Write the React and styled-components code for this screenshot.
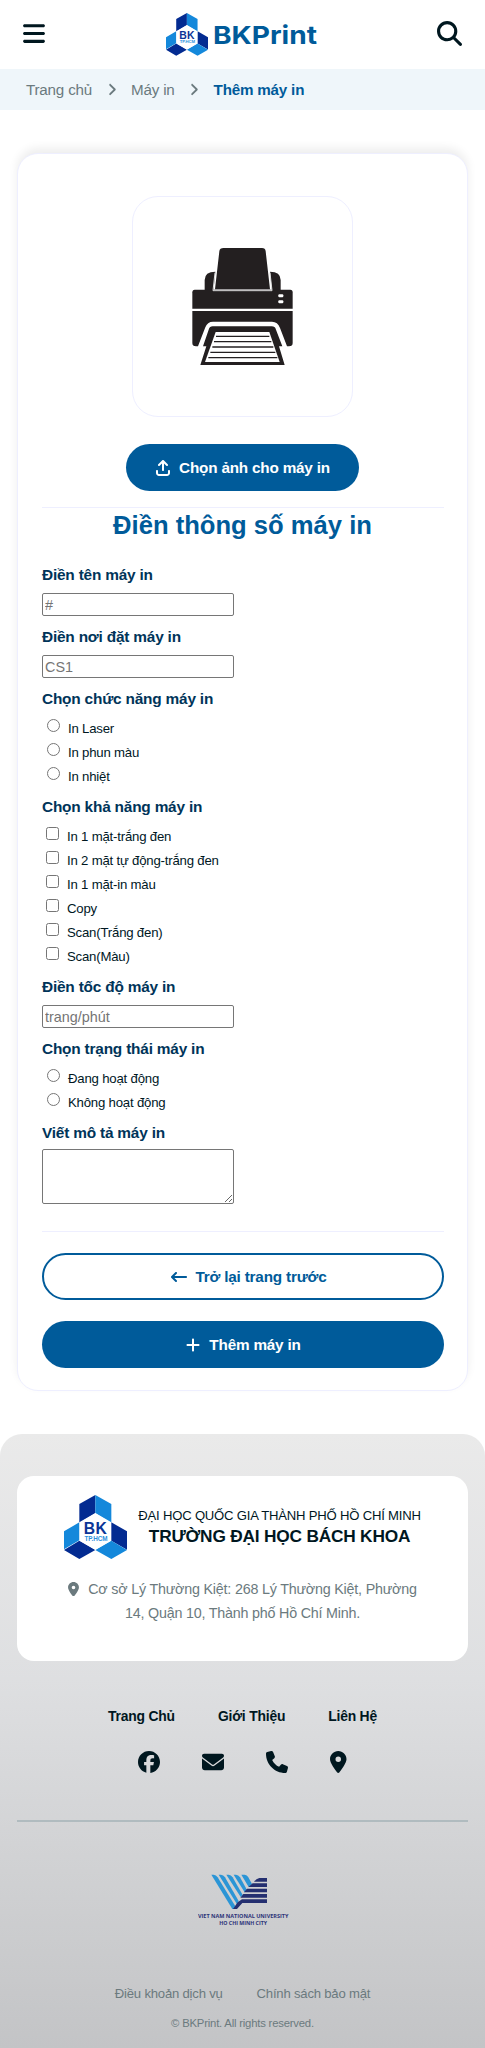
import React from "react";
import styled, { createGlobalStyle } from "styled-components";
import {
  FaBars,
  FaMagnifyingGlass,
  FaAngleRight,
  FaArrowUpFromBracket,
  FaArrowLeftLong,
  FaPlus,
  FaLocationDot,
  FaFacebook,
  FaEnvelope,
  FaPhone,
} from "react-icons/fa6";

const blue = "#005b9a";
const ink = "#00171f";
const muted = "#6b7a7e";
const line = "#eeefff";

const Global = createGlobalStyle`
  * { box-sizing: border-box; }
  body {
    margin: 0;
    background: #fff;
    color: ${ink};
    font-family: "Liberation Sans", Arial, sans-serif;
    letter-spacing: -0.2px;
  }
  svg { display: block; flex: none; }
`;

const Header = styled.header`
  height: 69px;
  padding: 0 23px;
  display: flex;
  align-items: center;
  justify-content: space-between;
  font-size: 25px;
`;

const MenuIcon = styled(FaBars)`
  width: 22px;
  height: 25px;
  margin-top: -3px;
`;

const SearchIcon = styled(FaMagnifyingGlass)`
  margin-top: -2px;
`;

const Brand = styled.div`
  display: flex;
  align-items: center;
  gap: 6px;
`;

const Breadcrumb = styled.nav`
  height: 41px;
  padding: 0 26px;
  display: flex;
  align-items: center;
  gap: 11.5px;
  background: #eff6fa;
  color: ${muted};
  font-size: 15.2px;
  svg { width: 16px; height: 15px; }
  b { color: ${blue}; }
`;

const Card = styled.main`
  margin: 43px 17px 0;
  height: 1238px;
  padding: 42px 23px 0 24px;
  border: 1px solid ${line};
  border-radius: 21px;
  background: #fff;
  box-shadow: 0 -5px 10px rgba(0, 0, 0, 0.07);
  display: flex;
  flex-direction: column;
`;

const Preview = styled.div`
  align-self: center;
  width: 221px;
  height: 221px;
  margin-right: 2px;
  border: 1px solid ${line};
  border-radius: 26px;
  overflow: hidden;
`;

const Button = styled.button`
  align-self: ${(p) => (p.$wide ? "stretch" : "center")};
  width: ${(p) => (p.$wide ? "auto" : "233px")};
  height: 47px;
  padding: 0 0 0 ${(p) => (p.$outline ? 12 : 0)}px;
  border: ${(p) => (p.$outline ? `2px solid ${blue}` : "0")};
  border-radius: 24px;
  background: ${(p) => (p.$outline ? "#fff" : blue)};
  color: ${(p) => (p.$outline ? blue : "#fff")};
  display: flex;
  align-items: center;
  justify-content: center;
  gap: 8px;
  font: 700 15.3px/20px "Liberation Sans", Arial, sans-serif;
  letter-spacing: -0.2px;
  margin: ${(p) => p.$top}px ${(p) => (p.$wide ? 0 : 1)}px 0 0;
  svg { width: 16px; height: 16px; }
`;

const Rule = styled.hr`
  width: 100%;
  height: 1px;
  border: 0;
  margin: ${(p) => p.$top}px 0 0;
  background: ${line};
`;

const Title = styled.h2`
  margin: 2px 1px 0 0;
  height: 55px;
  text-align: center;
  color: ${blue};
  font-size: 25.6px;
  letter-spacing: 0;
  line-height: 31px;
`;

const Label = styled.h3`
  margin: 0;
  height: ${(p) => (p.$tight ? 26 : 28)}px;
  color: #003459;
  font-size: 15.4px;
  line-height: 20px;
`;

const Input = styled.input`
  display: block;
  width: 192px;
  height: 23px;
  margin: 0 0 11px;
  padding: 1px 2px;
  border: 1px solid #767676;
  border-radius: 2px;
  font: 14.4px "Liberation Sans", Arial, sans-serif;
  &::placeholder { color: #757575; }
`;

const Area = styled.textarea`
  display: block;
  width: 192px;
  height: 55px;
  border: 1px solid #767676;
  border-radius: 2px;
`;

const Options = styled.div`
  padding-bottom: 8px;
`;

const Option = styled.label`
  height: 24px;
  padding-left: 4px;
  display: flex;
  align-items: center;
  gap: 8px;
  font-size: 13.2px;
  line-height: 20px;
  input { width: 13px; height: 13px; margin: 0 0 7px ${(p) => (p.$radio ? 1 : 0)}px; }
`;

const Footer = styled.footer`
  margin-top: 43px;
  height: 614px;
  padding: 42px 17px 0;
  border-radius: 22px 22px 0 0;
  background: linear-gradient(#eaeaea, #dedfe1 40%, #c3c4c6);
  display: flex;
  flex-direction: column;
`;

const School = styled.section`
  height: 185px;
  padding-top: 19px;
  border-radius: 17px;
  background: #fff;
  text-align: center;
`;

const SchoolHead = styled.div`
  display: flex;
  justify-content: center;
  gap: 11px;
`;

const SchoolName = styled.div`
  padding-top: 11px;
  font-size: 13.1px;
  line-height: 20px;
  b { display: block; font-size: 17.3px; line-height: 21px; }
`;

const Address = styled.p`
  margin: 18px auto 0;
  width: 350px;
  color: ${muted};
  font-size: 14.3px;
  line-height: 24px;
  svg { display: inline-block; width: 11px; height: 14.5px; vertical-align: -2px; margin-right: 9px; }
`;

const Links = styled.div`
  display: flex;
  justify-content: center;
  gap: ${(p) => p.$gap}px;
  margin-top: ${(p) => p.$top}px;
  line-height: 20px;
  font-size: ${(p) => p.$size}px;
  font-weight: ${(p) => (p.$bold ? 700 : 400)};
  color: ${(p) => (p.$bold ? ink : muted)};
`;

const Social = styled.div`
  display: flex;
  justify-content: center;
  gap: 42px;
  margin-top: 25px;
  font-size: 22px;
  svg:last-child { width: 16.5px; }
`;

const FooterRule = styled.hr`
  width: 100%;
  height: 2px;
  margin: 47px 0 52px;
  border: 0;
  background: #b0bbbf;
`;

const Copyright = styled.p`
  margin: 9px 0 0;
  text-align: center;
  color: ${muted};
  font-size: 11.3px;
  line-height: 20px;
`;

const VnuBox = styled.div`
  display: flex;
  justify-content: center;
  padding-left: 2px;
`;

function Wordmark() {
  return (
    <svg width="103" height="30" viewBox="0 0 103 30">
      <text x="-1" y="24" fill={blue} fontFamily="Inter, sans-serif" fontWeight="700" fontSize="24.5" letterSpacing="0" textLength="104" lengthAdjust="spacingAndGlyphs">BKPrint</text>
    </svg>
  );
}

function BkLogo({ size }) {
  const sans = "Liberation Sans, Arial, sans-serif";
  return (
    <svg width={size} height={(size * 192) / 189} viewBox="192 75 189 192">
      <path fill="#032b91" d="M286 75 238 102V157L286 129ZM334 157 381 184V239L334 212ZM192 240 238 212 286 240 238 267Z" />
      <path fill="#1488db" d="M286 75 334 102V157L286 129ZM238 157 192 184V238L238 211ZM286 240 334 212 381 240 334 267Z" />
      <path fill="#fff" d="M286 130 333 158V212L286 239 239 212V158Z" />
      <g fontFamily={sans} fontWeight="700" letterSpacing="0">
        <text x="286" y="193" textAnchor="middle" fontSize="47" textLength="69" fill="#0b3597">BK</text>
        <text x="288" y="212" textAnchor="middle" fontSize="19" textLength="69" fill="#2b8fdd">TP.HCM</text>
      </g>
    </svg>
  );
}

function Printer() {
  return (
    <svg width="219" height="219" viewBox="69 51 657 657">
      <g fill="#231f20">
        <path d="M341 204H456Q466 204 467 214L480 328H315L328 214Q329 204 341 204Z" />
        <path d="M316 275 310 334H284V300Q284 275 316 275ZM480 275Q512 275 512 300V334H486Z" />
        <path d="M254 329H541Q548 329 548 337V386H247V337Q247 329 254 329Z" />
        <path d="M247 393H548V489Q548 499 537 499H531L510 444Q503 425 486 425H309Q292 425 286 442L264 499H258Q247 499 247 489Z" />
        <path d="M308 439H485Q495 439 498 449L517 499H507L524 555H271L289 499H279L296 449Q299 439 308 439Z" />
      </g>
      <path d="M315 278 309 332H486L480 278" fill="none" stroke="#ddd" strokeWidth="3" />
      <path fill="#fff" d="M317 456H478L509 546H285Z" />
      <path d="M318 469H478M312 485H484M307 501H490M301 517H496M295 533H502" stroke="#231f20" strokeWidth="4" />
      <rect x="505" y="343" width="15" height="9" rx="3" fill="#fff" />
      <rect x="505" y="361" width="15" height="9" rx="3" fill="#fff" />
    </svg>
  );
}

function VnuLogo() {
  const stripes = [
    "M635 584H642Q649 584 654 592L708 680 704 687H698Z",
    "M657 584H664Q671 584 676 592L717 663 712 673Z",
    "M680 584H687Q694 584 699 592L729 645 723 651Z",
    "M702 584H709Q716 584 721 592L742 630 735 637Z",
    "M725 584H735Q742 584 746 592L757 612 747 621Z",
  ];
  return (
    <svg width="91" height="52" viewBox="595 582 273 156">
      {stripes.map((d) => <path key={d} d={d} fill="#2b95d6" />)}
      <path fill="#242f70" d="M779 594H802V605H763Q770 596 779 594ZM759 610H802V621H746ZM742 626H802V637H733ZM731 642H802V653H722ZM727 658H802V669H728L712 687H700L714 667Z" />
      <g fill="#2c3478" fontFamily="Open Sans, sans-serif" fontWeight="700" fontSize="16" letterSpacing="0">
        <text x="595" y="713" textLength="271" lengthAdjust="spacingAndGlyphs">VIET NAM NATIONAL UNIVERSITY</text>
        <text x="659" y="734" textLength="143" lengthAdjust="spacingAndGlyphs">HO CHI MINH CITY</text>
      </g>
    </svg>
  );
}

function Choices({ type, name, items }) {
  return (
    <Options>
      {items.map((t) => (
        <Option key={t} $radio={type === "radio"}>
          <input type={type} name={name} />
          <span>{t}</span>
        </Option>
      ))}
    </Options>
  );
}

export default function App() {
  return (
    <>
      <Global />
      <Header>
        <MenuIcon />
        <Brand>
          <BkLogo size={42} />
          <Wordmark />
        </Brand>
        <SearchIcon />
      </Header>
      <Breadcrumb>
        <span>Trang chủ</span>
        <FaAngleRight />
        <span>Máy in</span>
        <FaAngleRight />
        <b>Thêm máy in</b>
      </Breadcrumb>
      <Card>
        <Preview><Printer /></Preview>
        <Button $top={27}><FaArrowUpFromBracket />Chọn ảnh cho máy in</Button>
        <Rule $top={16} />
        <Title>Điền thông số máy in</Title>
        <Label>Điền tên máy in</Label>
        <Input placeholder="#" />
        <Label>Điền nơi đặt máy in</Label>
        <Input placeholder="CS1" />
        <Label>Chọn chức năng máy in</Label>
        <Choices type="radio" name="kind" items={["In Laser", "In phun màu", "In nhiệt"]} />
        <Label>Chọn khả năng máy in</Label>
        <Choices
          type="checkbox"
          name="ability"
          items={["In 1 mặt-trắng đen", "In 2 mặt tự động-trắng đen", "In 1 mặt-in màu", "Copy", "Scan(Trắng đen)", "Scan(Màu)"]}
        />
        <Label>Điền tốc độ máy in</Label>
        <Input placeholder="trang/phút" />
        <Label>Chọn trạng thái máy in</Label>
        <Choices type="radio" name="state" items={["Đang hoạt động", "Không hoạt động"]} />
        <Label $tight>Viết mô tả máy in</Label>
        <Area />
        <Rule $top={27} />
        <Button $wide $outline $top={21}><FaArrowLeftLong />Trở lại trang trước</Button>
        <Button $wide $top={21}><FaPlus />Thêm máy in</Button>
      </Card>
      <Footer>
        <School>
          <SchoolHead>
            <BkLogo size={63} />
            <SchoolName>
              ĐẠI HỌC QUỐC GIA THÀNH PHỐ HỒ CHÍ MINH
              <b>TRƯỜNG ĐẠI HỌC BÁCH KHOA</b>
            </SchoolName>
          </SchoolHead>
          <Address>
            <FaLocationDot />
            Cơ sở Lý Thường Kiệt: 268 Lý Thường Kiệt, Phường 14, Quận 10, Thành phố Hồ Chí Minh.
          </Address>
        </School>
        <Links $bold $gap={43} $size={13.9} $top={45}>
          <span>Trang Chủ</span>
          <span>Giới Thiệu</span>
          <span>Liên Hệ</span>
        </Links>
        <Social>
          <FaFacebook />
          <FaEnvelope />
          <FaPhone />
          <FaLocationDot />
        </Social>
        <FooterRule />
        <VnuBox><VnuLogo /></VnuBox>
        <Links $gap={34} $size={13.1} $top={58}>
          <span>Điều khoản dịch vụ</span>
          <span>Chính sách bảo mật</span>
        </Links>
        <Copyright>© BKPrint. All rights reserved.</Copyright>
      </Footer>
    </>
  );
}
